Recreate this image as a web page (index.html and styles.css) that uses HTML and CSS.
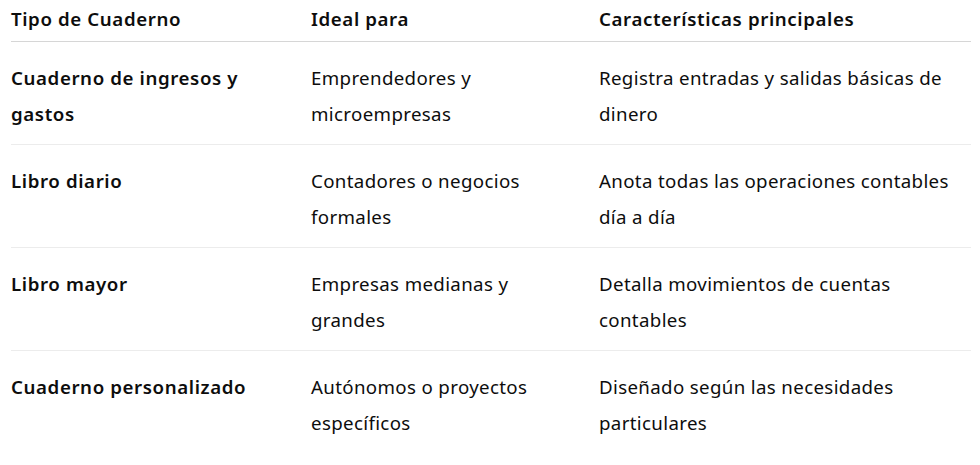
FILE: index.html
```html
<!DOCTYPE html>
<html lang="es"><head><meta charset="utf-8"><link rel="stylesheet" href="styles.css"></head>
<body>
<table class="grid">
  <colgroup><col class="c1"><col class="c2"><col class="c3"></colgroup>
  <thead>
    <tr><th>Tipo de Cuaderno</th><th>Ideal para</th><th>Características principales</th></tr>
  </thead>
  <tbody>
    <tr><td class="name">Cuaderno de ingresos y gastos</td><td>Emprendedores y microempresas</td><td>Registra entradas y salidas básicas de dinero</td></tr>
    <tr><td class="name">Libro diario</td><td>Contadores o negocios formales</td><td>Anota todas las operaciones contables día a día</td></tr>
    <tr><td class="name">Libro mayor</td><td>Empresas medianas y grandes</td><td>Detalla movimientos de cuentas contables</td></tr>
    <tr><td class="name">Cuaderno personalizado</td><td>Autónomos o proyectos específicos</td><td>Diseñado según las necesidades particulares</td></tr>
  </tbody>
</table>
</body></html>
```
FILE: styles.css
```css
html,body{background:#fff}
body{margin:0;padding:0 9px 0 11px;color:#0d0d0d;font-family:"Noto Sans",sans-serif;font-size:18.7px}
.grid{border-collapse:collapse;table-layout:fixed;width:960px}
.c1{width:300px}
.c2{width:288px}
.c3{width:372px}
.grid th{text-align:left;font-weight:600;letter-spacing:0.6px;line-height:28px;padding:5px 0 8px 0;border-bottom:1px solid #d6d6d6;vertical-align:top}
.grid td{line-height:36px;padding:18px 0 12px 0;border-bottom:1px solid #ececec;vertical-align:top;letter-spacing:0.35px}
.grid td:nth-child(1){padding-right:24px}
.grid td:nth-child(2){padding-right:38px}
.grid td:nth-child(3){padding-right:8px}
.grid tbody tr:last-child td{border-bottom:none}
.grid td.name{font-weight:600;letter-spacing:0.6px}
```
